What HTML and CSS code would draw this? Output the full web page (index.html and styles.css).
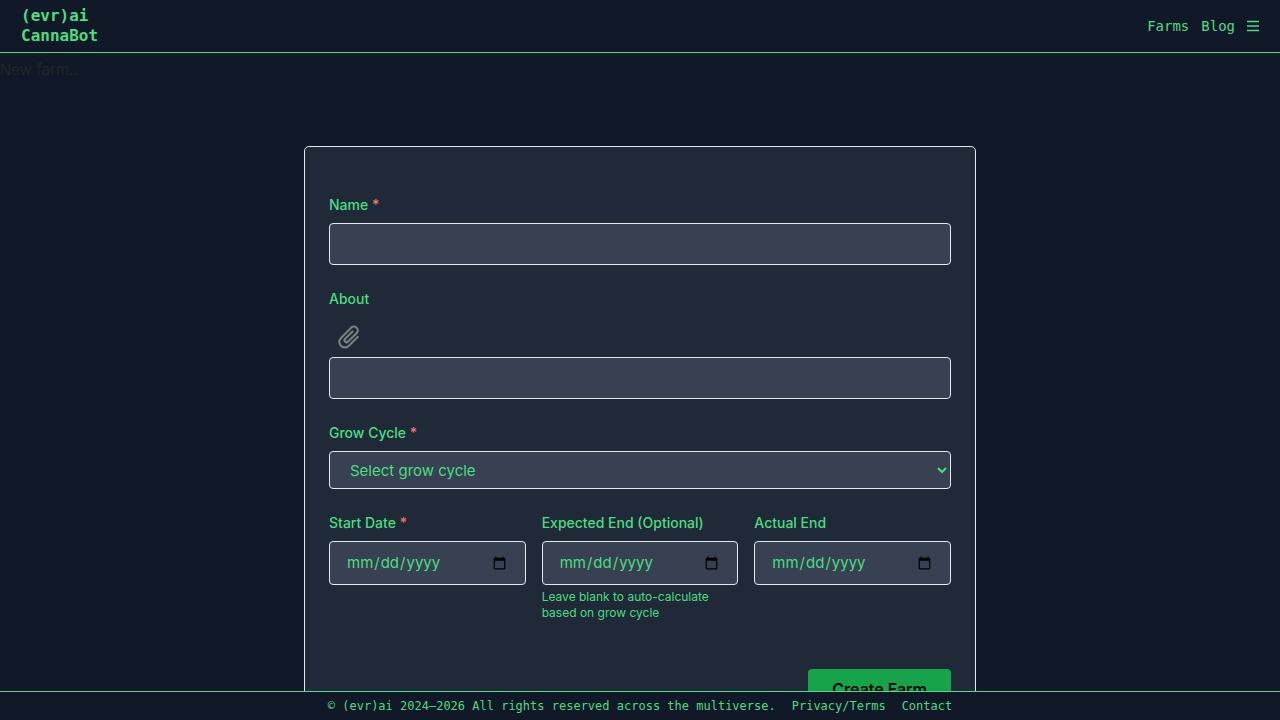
FILE: index.html
```html
<!DOCTYPE html>
<html lang="en">
<head>
<meta charset="utf-8">
<meta name="viewport" content="width=device-width, initial-scale=1">
<title>New farm</title>
<link rel="stylesheet" href="styles.css">
</head>
<body>
<header class="site-header">
  <a class="brand" href="#"><span>(evr)ai</span><span>CannaBot</span></a>
  <nav class="nav">
    <a href="#">Farms</a>
    <a href="#">Blog</a>
    <button class="menu-button" type="button" aria-label="Menu">
      <svg width="12" height="14" viewBox="0 0 12 14" fill="none" stroke="currentColor" stroke-width="1.5" aria-hidden="true"><path d="M0 2.500h12M0 7h12M0 11.500h12"/></svg>
    </button>
  </nav>
</header>
<main class="page">
  <p class="page-title">New farm..</p>
  <form class="card">
    <div class="field">
      <label for="name">Name <span class="required">*</span></label>
      <input class="control" id="name" type="text">
    </div>
    <div class="field">
      <label for="about">About</label>
      <div class="toolbar">
        <button class="attach" type="button" aria-label="Attach files">
          <svg width="28" height="28" viewBox="0 0 24 24" fill="currentColor" stroke="currentColor" stroke-width=".3" aria-hidden="true"><g transform="rotate(45 12 12)"><path d="M16.500 6v11.500a4 4 0 0 1-8 0V5a2.500 2.500 0 0 1 5 0v10.500a1 1 0 0 1-2 0V6H10v9.500a2.500 2.500 0 0 0 5 0V5a4 4 0 0 0-8 0v12.500a5.500 5.500 0 0 0 11 0V6z"/></g></svg>
        </button>
      </div>
      <input class="control" id="about" type="text">
    </div>
    <div class="field">
      <label for="cycle">Grow Cycle <span class="required">*</span></label>
      <select class="control select" id="cycle"><option>Select grow cycle</option></select>
    </div>
    <div class="dates">
      <div class="date">
        <label for="start">Start Date <span class="required">*</span></label>
        <input class="control date-input" id="start" type="date">
      </div>
      <div class="date">
        <label for="expected">Expected End (Optional)</label>
        <input class="control date-input" id="expected" type="date">
        <p class="hint">Leave blank to auto-calculate based on grow cycle</p>
      </div>
      <div class="date">
        <label for="actual">Actual End</label>
        <input class="control date-input" id="actual" type="date">
      </div>
    </div>
    <div class="actions"><button class="submit" type="submit">Create Farm</button></div>
  </form>
</main>
<footer class="site-footer">
  <span>© (evr)ai 2024–2026 All rights reserved across the multiverse.</span>
  <a href="#">Privacy/Terms</a>
  <a href="#">Contact</a>
</footer>
</body>
</html>
```
FILE: styles.css
```css
* { box-sizing: border-box; }

body {
  margin: 0;
  background: #111827;
  color: #212529;
  font: 16px/24px Inter, "Liberation Sans", sans-serif;
}

a { color: inherit; text-decoration: none; }
p { margin: 0; }
button, input, select { font: inherit; }

.site-header {
  position: sticky;
  top: 0;
  z-index: 10;
  display: flex;
  align-items: center;
  justify-content: space-between;
  padding: 6px 21px;
  background: #111827;
  border-bottom: 1px solid #4ade80;
  color: #4ade80;
  font-family: "DejaVu Sans Mono", monospace;
}

.brand {
  display: flex;
  flex-direction: column;
  font-weight: 700;
  line-height: 20px;
}

.nav {
  display: flex;
  align-items: center;
  gap: 12px;
  font-size: 14px;
  line-height: 20px;
}

.menu-button {
  display: flex;
  padding: 0;
  border: 0;
  background: none;
  color: inherit;
}

.page { padding: 5px 0 80px; }
.page-title { font-size: 15px; }

.card {
  max-width: 672px;
  margin: 64px auto 0;
  padding: 48px 24px 24px;
  background: #1f2937;
  border: 1px solid #e5e7eb;
  border-radius: 5px;
  color: #4ade80;
}

.field { margin-bottom: 24px; }

label {
  display: block;
  margin-bottom: 8px;
  font-size: 14px;
  font-weight: 500;
  line-height: 20px;
}

.required { color: #f87171; }

.control {
  display: block;
  width: 100%;
  height: 42px;
  padding: 8px 16px;
  background: #374151;
  border: 1px solid #e5e7eb;
  border-radius: 4px;
  color: #4ade80;
  font-size: 15px;
}

.select { height: 38px; }
.date-input { height: 44px; }

.toolbar { display: flex; height: 40px; padding-left: 6px; }

.attach {
  display: flex;
  align-items: center;
  padding: 0;
  border: 0;
  background: none;
  color: #7d8286;
}

.dates {
  display: grid;
  grid-template-columns: repeat(3, minmax(0, 1fr));
  gap: 16px;
}

.hint {
  margin-top: 4px;
  font-size: 12px;
  line-height: 16px;
}

.actions {
  display: flex;
  justify-content: flex-end;
  margin-top: 48px;
}

.submit {
  padding: 8px 24px;
  border: 0;
  border-radius: 4px;
  background: #16a34a;
  color: #000;
  font-weight: 600;
}

.site-footer {
  position: fixed;
  right: 0;
  bottom: 0;
  left: 0;
  z-index: 10;
  display: flex;
  justify-content: center;
  gap: 16px;
  padding: 6px 16px;
  background: #111827;
  border-top: 1px solid #4ade80;
  color: #4ade80;
  font: 12px/16px "DejaVu Sans Mono", monospace;
}
```
